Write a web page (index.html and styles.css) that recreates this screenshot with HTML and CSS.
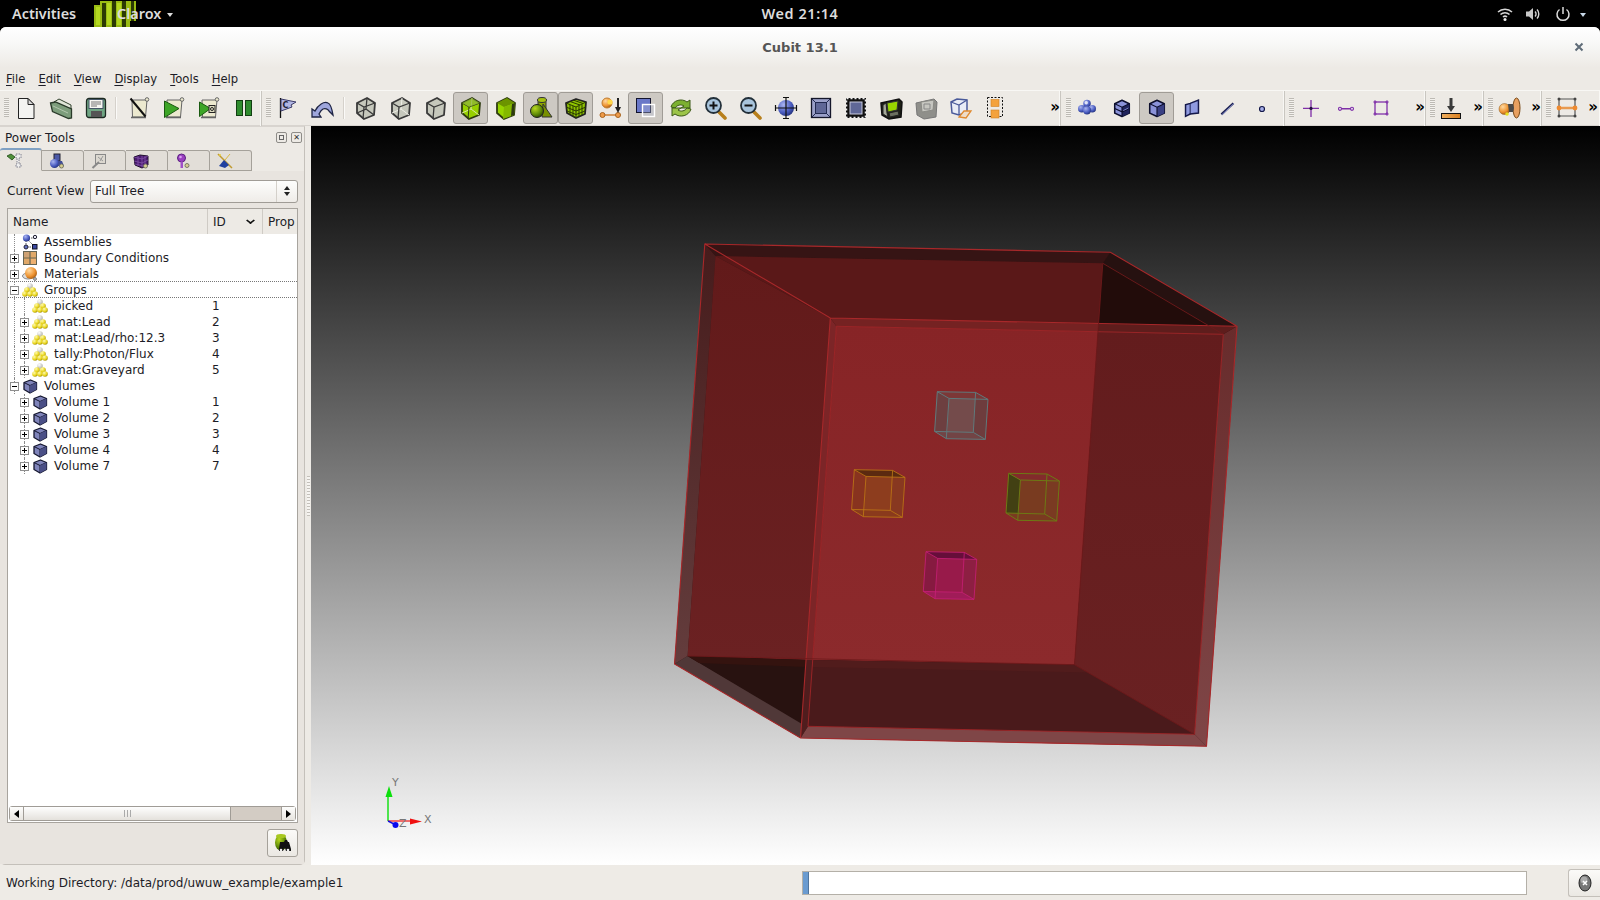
FILE: index.html
```html
<!DOCTYPE html>
<html lang="en">
<head>
<meta charset="utf-8">
<title>Cubit 13.1</title>
<link rel="stylesheet" href="styles.css">
</head>
<body>
<svg class="sprite" aria-hidden="true">
<defs>
<radialGradient id="gy" cx=".35" cy=".3" r=".8"><stop offset="0" stop-color="#fffbb0"/><stop offset=".6" stop-color="#e8d41c"/><stop offset="1" stop-color="#8f7f08"/></radialGradient>
<radialGradient id="gw" cx=".35" cy=".3" r=".8"><stop offset="0" stop-color="#fff"/><stop offset="1" stop-color="#a9a9a0"/></radialGradient>
<radialGradient id="go" cx=".35" cy=".3" r=".8"><stop offset="0" stop-color="#ffd9a0"/><stop offset=".6" stop-color="#ee9330"/><stop offset="1" stop-color="#96500c"/></radialGradient>
<radialGradient id="gb" cx=".35" cy=".3" r=".8"><stop offset="0" stop-color="#a9b4f0"/><stop offset=".6" stop-color="#4a5cc0"/><stop offset="1" stop-color="#1c2a70"/></radialGradient>
<radialGradient id="gg" cx=".35" cy=".3" r=".8"><stop offset="0" stop-color="#b8d820"/><stop offset=".6" stop-color="#5f8a08"/><stop offset="1" stop-color="#233a00"/></radialGradient>
<linearGradient id="gbar" x1="0" x2="1"><stop offset="0" stop-color="#f0b060"/><stop offset="1" stop-color="#d87f20"/></linearGradient>

<symbol id="i-new" viewBox="0 0 24 24"><path d="M4.500 2.500h9.500l6 6v14h-15.500z" fill="#f3f3f1" stroke="#222"/><path d="M14 2.500v6h6z" fill="#d8d8d8" stroke="#222"/></symbol>
<symbol id="i-open" viewBox="0 0 24 24"><path d="M5 6l5-3 12 6v4z" fill="#dfe5d8" stroke="#33432f"/><path d="M1.500 7l5-1 16 7v9l-3 .5-16-7z" fill="#7d9d7c" stroke="#2a3a2a" stroke-width="1.300"/><path d="M4 10l15 7" stroke="#b3c7ae"/></symbol>
<symbol id="i-save" viewBox="0 0 24 24"><rect x="2.500" y="2.500" width="19" height="19" rx="2.500" fill="#6fa583" stroke="#1d2a22" stroke-width="1.300"/><rect x="5" y="3.500" width="14" height="9" fill="#f6f6f2" stroke="#456"/><path d="M7 6h10M7 8h10M7 10h6" stroke="#777"/><rect x="7" y="15" width="11" height="6" fill="#555"/></symbol>
<symbol id="i-scroll" viewBox="0 0 24 24"><path d="M5 4h15l-1.500 17H5.500z" fill="#ece9cf" stroke="#666"/><circle cx="20" cy="3.500" r="1.800" fill="#ece9cf" stroke="#666"/><path d="M4 21.500h15" stroke="#666" stroke-width="1.500"/></symbol>
<symbol id="i-script" viewBox="0 0 24 24"><use href="#i-scroll"/><path d="M3.500 2.500l15 18" stroke="#111" stroke-width="2"/></symbol>
<symbol id="i-play" viewBox="0 0 24 24"><use href="#i-scroll"/><path d="M2.500 5l14.500 7.500-14.500 9z" fill="#3da526" stroke="#1a5a10"/></symbol>
<symbol id="i-playr" viewBox="0 0 24 24"><use href="#i-scroll"/><path d="M2.500 6l11 6.500-11 8z" fill="#3da526" stroke="#1a5a10"/><rect x="12" y="9.500" width="6" height="7" fill="#dedcc0" stroke="#222"/><circle cx="15" cy="13" r="1.500" fill="none" stroke="#222"/></symbol>
<symbol id="i-pause" viewBox="0 0 24 24"><rect x="4.500" y="4.500" width="6" height="15" fill="#2f8c2e" stroke="#123f12"/><rect x="13.500" y="4.500" width="6" height="15" fill="#2f8c2e" stroke="#123f12"/></symbol>
<symbol id="i-flag" viewBox="0 0 24 24"><path d="M5.500 2v20" stroke="#111" stroke-width="1.300"/><path d="M6 3l15 3-5 3 1 2-11 4z" fill="#b2b6e2" stroke="#3a3a66"/><text x="7.500" y="11.500" font-family="DejaVu Sans" font-size="8" font-weight="700" fill="#223">C</text></symbol>
<symbol id="i-undo" viewBox="0 0 24 24"><path d="M2 21v-8l3 2c3-6 9-10 13-8 3 1 4 6 5 12l-4-4c-1-2-4-3-6-2-2 1-3 3-4 5l2 3z" fill="#9ea6dc" stroke="#1e2444" stroke-width="1.300"/></symbol>

<symbol id="i-cwire" viewBox="0 0 24 24"><path d="M3 7l10-5 8 5-1 12-10 4-7-6z" fill="#c6c8bc" stroke="#3a3a3a" stroke-width="1.800" stroke-linejoin="round"/><path d="M3 7l7 4 11-4M10 11l-1 12M13 2l-1 11-9 4M12 13l8 6" fill="none" stroke="#3a3a3a" stroke-width="1.300"/></symbol>
<symbol id="i-chid" viewBox="0 0 24 24"><path d="M3 7l10-5 8 5-1 12-10 4-7-6z" fill="#c6c8bc" stroke="#3a3a3a" stroke-width="1.800" stroke-linejoin="round"/><path d="M13 2l-1 11-9 4M12 13l8 6" fill="none" stroke="#eeeee6"/><path d="M3 7l7 4 11-4M10 11l-1 12" fill="none" stroke="#3a3a3a" stroke-width="1.300"/></symbol>
<symbol id="i-cgray" viewBox="0 0 24 24"><path d="M3 7l10-5 8 5-1 12-10 4-7-6z" fill="#c6c8bc" stroke="#3a3a3a" stroke-width="1.800" stroke-linejoin="round"/><path d="M3 7l7 4 11-4M10 11l-1 12" fill="none" stroke="#3a3a3a" stroke-width="1.300"/></symbol>
<symbol id="i-cgw" viewBox="0 0 24 24"><path d="M3 7l10-5 8 5-1 12-10 4-7-6z" fill="#97d000" stroke="#2e3a10" stroke-width="1.800" stroke-linejoin="round"/><path d="M13 2l-1 11-9 4M12 13l8 6" fill="none" stroke="#d8e8a0"/><path d="M3 7l7 4 11-4M10 11l-1 12" fill="none" stroke="#2e3a10"/><path d="M13 2l8 5-11 4-7-4z" fill="#8fb33a" opacity=".7"/></symbol>
<symbol id="i-cg" viewBox="0 0 24 24"><path d="M3 7l10-5 8 5-1 12-10 4-7-6z" fill="#97d400" stroke="#2e3a10" stroke-width="1.800" stroke-linejoin="round"/><path d="M13 2l8 5-11 4-7-4z" fill="#6c9400"/><path d="M21 7l-11 4-1 12 11-4z" fill="#84b800"/><path d="M21 7l-1 12-3 1 1-12z" fill="#2e3a10"/></symbol>
<symbol id="i-comp" viewBox="0 0 24 24"><path d="M9 4v12h8V4z" fill="#8aa300" stroke="#333"/><ellipse cx="13" cy="4" rx="4.500" ry="2.500" fill="#a4c010" stroke="#333"/><path d="M14 8l9 13H13z" fill="#789000" stroke="#333"/><circle cx="8" cy="15" r="6.500" fill="url(#gg)" stroke="#222"/></symbol>
<symbol id="i-mesh" viewBox="0 0 24 24"><path d="M2 7l10-4 10 3-1 12-9 4-9-5z" fill="#8fc400" stroke="#222" stroke-width="1.800" stroke-linejoin="round"/><path d="M2 7l10 4 10-5M12 11v11M6 5.500l10 3.500M9 4l10 3.500M6 9v10M9 10v11M15 10v11M18 8.500v11M2 11l10 4 10-4M3 15l9 3.500 9-3.500" fill="none" stroke="#2a3a00"/></symbol>
<symbol id="i-pick" viewBox="0 0 24 24"><circle cx="8" cy="7" r="5" fill="url(#go)" stroke="#c07c30"/><circle cx="11" cy="6" r="2.600" fill="#ffd84a"/><path d="M3 19h16" stroke="#d69a60" stroke-width="2"/><circle cx="3.500" cy="19" r="2.500" fill="#ee9a48" stroke="#a86420"/><circle cx="19" cy="19" r="2.500" fill="#ee9a48" stroke="#a86420"/><path d="M19 2v11" stroke="#222" stroke-width="2"/><path d="M16 11l3 6 3-6z" fill="#222"/></symbol>
<symbol id="i-trans" viewBox="0 0 24 24"><rect x="2.500" y="2.500" width="14" height="14" fill="#6a78c8" stroke="#12142e"/><rect x="8.500" y="8.500" width="12" height="12" fill="#b8bcd8" fill-opacity=".35" stroke="#fff" stroke-width="1.400"/></symbol>
<symbol id="i-ref" viewBox="0 0 24 24"><path d="M2 11c2-7 11-9 16-5l3-2v8h-9l3-2c-3-2-7-1-9 2z" fill="#7cb030" stroke="#3d5a18"/><path d="M22 13c-2 7-11 9-16 5l-3 2v-8h9l-3 2c3 2 7 1 9-2z" fill="#9cc448" stroke="#3d5a18"/></symbol>
<symbol id="i-zin" viewBox="0 0 24 24"><path d="M14 15l7 7" stroke="#b8801c" stroke-width="3.600" stroke-linecap="round"/><circle cx="9.500" cy="9.500" r="7.500" fill="#a8c4dc" stroke="#23303a" stroke-width="1.800"/><path d="M5.500 9.500h8M9.500 5.500v8" stroke="#111" stroke-width="2"/></symbol>
<symbol id="i-zout" viewBox="0 0 24 24"><path d="M14 15l7 7" stroke="#b8801c" stroke-width="3.600" stroke-linecap="round"/><circle cx="9.500" cy="9.500" r="7.500" fill="#a8c4dc" stroke="#23303a" stroke-width="1.800"/><path d="M5.500 9.500h8" stroke="#111" stroke-width="2"/></symbol>
<symbol id="i-aim" viewBox="0 0 24 24"><circle cx="12" cy="12" r="8" fill="url(#gb)"/><path d="M1.500 12h21M12 1.500v21M1.500 9v6M22.500 9v6M9 1.500h6M9 22.500h6" stroke="#111" stroke-width="1.200" fill="none"/></symbol>
<symbol id="i-fit" viewBox="0 0 24 24"><rect x="2.500" y="2.500" width="19" height="19" fill="#9aa0c8" stroke="#15172a" stroke-width="1.300"/><rect x="6.500" y="6.500" width="11" height="11" fill="#5f6796" stroke="#222a50"/><path d="M3 3l4 4M21 3l-4 4M3 21l4-4M21 21l-4-4" stroke="#222a50"/></symbol>
<symbol id="i-film" viewBox="0 0 24 24"><rect x="2" y="2" width="20" height="20" fill="#111"/><rect x="2.500" y="2.500" width="19" height="19" fill="none" stroke="#eee" stroke-width="1.500" stroke-dasharray="2 2"/><rect x="6" y="6" width="12" height="12" fill="#5f6796" stroke="#c8cadc"/></symbol>
<symbol id="i-persp" viewBox="0 0 24 24"><path d="M2 7l18-4 3 3-1 15-12 2-7-4z" fill="#1e2016" stroke="#111" stroke-width="1.500"/><path d="M8 7l11-2-1 9-9 2z" fill="#98d400" stroke="#333"/><path d="M4 9l3-2 1 10 1 4-5-3z" fill="#a4a898" stroke="#222"/><path d="M10 17l9-2 1 4-9 2z" fill="#6c7060" stroke="#222"/></symbol>
<symbol id="i-persg" viewBox="0 0 24 24"><path d="M2 7l18-4 3 3-1 15-12 2-7-4z" fill="#8f8f8a" stroke="#777"/><path d="M7 6l13-2-1 10-11 2z" fill="#c6c6c0" stroke="#8a8a85"/><path d="M10 8h6v5h-6z" fill="none" stroke="#888"/></symbol>
<symbol id="i-clip" viewBox="0 0 24 24"><path d="M2 6l6-3 10 1v12l-8 3-7-2z" fill="#e8ecf6" stroke="#4a5a9a" stroke-width="1.500"/><path d="M2 6l8 3 8-5M10 9v10" fill="none" stroke="#4a5a9a" stroke-width="1.300"/><path d="M15 15l7 0-5 7-7-1z" fill="#eedcc8" stroke="#e08a30" stroke-width="1.300"/></symbol>
<symbol id="i-sel" viewBox="0 0 24 24"><rect x="3.500" y="1.500" width="15" height="19" fill="none" stroke="#111" stroke-dasharray="2 1.500"/><rect x="7" y="3.500" width="8" height="7" fill="#f4a23c" stroke="#d08020" stroke-width=".6"/><rect x="7" y="14" width="8" height="8" fill="#f4a23c" stroke="#d08020" stroke-width=".6"/></symbol>

<symbol id="i-vols" viewBox="-4 -4 32 32"><circle cx="12" cy="6" r="5" fill="url(#gb)"/><circle cx="5" cy="13" r="5" fill="url(#gb)"/><circle cx="19" cy="13" r="5" fill="url(#gb)"/><circle cx="12" cy="15" r="5.500" fill="url(#gb)"/><circle cx="11" cy="5" r="2.200" fill="#dfe3f7"/></symbol>
<symbol id="i-vol" viewBox="-2 -2 28 28"><path d="M3.500 7l8.500-4 8.500 4v11l-8.500 4-8.500-4z" fill="#8a92d8" stroke="#0c0e2c" stroke-width="1.800" stroke-linejoin="round"/><path d="M12 11l8.500-4v11l-8.500 4z" fill="#20245c"/><path d="M3.500 7l8.500 4 8.500-4M12 11v11M3.500 12.500l8.500 4 8.500-4" fill="none" stroke="#0c0e2c" stroke-width="1.300"/><path d="M13.500 15l6-3" stroke="#8a92d8"/></symbol>
<symbol id="i-vol2" viewBox="-2 -2 28 28"><path d="M3.500 7l8.500-4 8.500 4v11l-8.500 4-8.500-4z" fill="#8a92d8" stroke="#0c0e2c" stroke-width="1.800" stroke-linejoin="round"/><path d="M12 11l8.500-4v11l-8.500 4z" fill="#3a4084"/><path d="M3.500 7l8.500 4 8.500-4M12 11v11" fill="none" stroke="#0c0e2c" stroke-width="1.300"/></symbol>
<symbol id="i-surf" viewBox="-1 -1 26 26"><path d="M5 8.500l5-1.500 9-3.500v14l-9 1-5 2.500z" fill="#8f9ae0" stroke="#14184a" stroke-width="1.600"/><path d="M10 7v12" stroke="#14184a"/></symbol>
<symbol id="i-curve" viewBox="-3 -3 30 30"><path d="M5 20L20 6" stroke="#1c2050" stroke-width="2.800"/><path d="M5.500 20.500L20.500 6.500" stroke="#9aa4e4" stroke-width="1"/></symbol>
<symbol id="i-vert" viewBox="0 0 24 24"><circle cx="12" cy="13" r="2.500" fill="#a6aee8" stroke="#14184a" stroke-width="1.200"/></symbol>
<symbol id="i-pn" viewBox="-1.500 -1.500 27 27"><path d="M3 12.500h18M12 3v19" stroke="#7f2fa8" stroke-width="1.500"/><circle cx="12" cy="12.500" r="1.800" fill="#241040"/></symbol>
<symbol id="i-pl" viewBox="-3 -3 30 30"><path d="M6 13h12" stroke="#7f2fa8" stroke-width="1.700"/><circle cx="4.500" cy="13" r="1.900" fill="#e8e4f0" stroke="#7f2fa8" stroke-width="1.400"/><circle cx="19.500" cy="13" r="1.900" fill="#e8e4f0" stroke="#7f2fa8" stroke-width="1.400"/></symbol>
<symbol id="i-ps" viewBox="-2 -2 28 28"><rect x="5" y="5" width="14" height="14" fill="none" stroke="#7f2fa8" stroke-width="1.500"/><path d="M3 5h4M5 3v4M17 5h4M19 3v4M3 19h4M5 17v4M17 19h4M19 17v4" stroke="#7f2fa8" stroke-width="1.300"/></symbol>
<symbol id="i-bar" viewBox="0 0 24 24"><path d="M12 2v10" stroke="#3a3a3a" stroke-width="3"/><path d="M8 10l4 6 4-6z" fill="#3a3a3a"/><rect x="2.500" y="17.500" width="19" height="5" fill="url(#gbar)" stroke="#111"/></symbol>
<symbol id="i-spk" viewBox="0 0 24 24"><ellipse cx="19.500" cy="12" rx="3.500" ry="10" fill="#e8a060" stroke="#7a4a18"/><circle cx="7.500" cy="13" r="5.500" fill="url(#go)" stroke="#8a5a20" stroke-width=".5"/><path d="M11 8h5l1 4-1 4h-4z" fill="#4a4a4a"/><circle cx="10" cy="18" r="1.800" fill="#e8e020"/></symbol>
<symbol id="i-mrect" viewBox="0 0 24 24"><path d="M4 3h16v17H4z" fill="none" stroke="#555" stroke-width="1.200"/><path d="M4 12h16" stroke="#e89a50" stroke-width="2.500"/><circle cx="4" cy="12" r="2.400" fill="#ee8a30"/><circle cx="20" cy="12" r="2.400" fill="#ee8a30"/><circle cx="4" cy="3" r="1.500" fill="#444"/><circle cx="20" cy="3" r="1.500" fill="#444"/><circle cx="4" cy="20" r="1.500" fill="#444"/><circle cx="20" cy="20" r="1.500" fill="#444"/></symbol>

<symbol id="t-asm" viewBox="0 0 16 16"><path d="M4 4l9 0M4 4v9h9M4 4l9 9" stroke="#333" stroke-width=".8" fill="none" stroke-dasharray="1.500 1"/><circle cx="4.500" cy="4" r="3.600" fill="url(#gb)"/><circle cx="13" cy="3" r="1.700" fill="#e8e8f4" stroke="#223"/><circle cx="4" cy="13" r="2" fill="#6070c0" stroke="#223"/><rect x="10.500" y="10.500" width="4.500" height="4.500" fill="#3a48a0" stroke="#112"/></symbol>
<symbol id="t-bc" viewBox="0 0 16 16"><rect x="1.500" y="1.500" width="13" height="13" fill="#e0a868" stroke="#665"/><path d="M1 8h14M8 1v14" stroke="#665" stroke-width="1.200"/><path d="M2 2h5v5H2z" fill="#cfa274"/><path d="M9 9h5v5H9z" fill="#eeb070"/></symbol>
<symbol id="t-mat" viewBox="0 0 16 16"><ellipse cx="6" cy="10" rx="5.500" ry="3" fill="#ddd" stroke="#888"/><circle cx="9" cy="7" r="6" fill="url(#go)"/><circle cx="13" cy="13" r="1.400" fill="#ccc" stroke="#777"/></symbol>
<symbol id="t-grp" viewBox="0 0 16 16"><circle cx="8" cy="4" r="2.800" fill="url(#gw)"/><circle cx="5" cy="8" r="2.800" fill="url(#gy)"/><circle cx="11" cy="8" r="2.800" fill="url(#gy)"/><circle cx="3" cy="12" r="2.800" fill="url(#gy)"/><circle cx="8" cy="12" r="2.800" fill="url(#gy)"/><circle cx="13" cy="12" r="2.800" fill="url(#gy)"/></symbol>
<symbol id="t-vol" viewBox="0 0 16 16"><path d="M2 4.500L8.500 2 14.500 4.500V11.500L8 15 2 11.500z" fill="#7f84ba" stroke="#14162e" stroke-width="1.300" stroke-linejoin="round"/><path d="M2 4.500L8 7.500l6.500-3M8 7.500V15" fill="none" stroke="#14162e"/><path d="M8 7.500l6.500-3v7L8 15z" fill="#4a4f86"/></symbol>
</defs>
</svg>

<header class="topbar">
  <span class="activities">Activities</span>
  <svg class="logo" viewBox="0 0 45 27"><path d="M1 5h6V1h36v20h-6v6H1z" fill="#9abc14"/><path d="M9 3h4v24H9zM19 1h4v26h-4zM29 1h4v26h-4zM38 1h3v20h-3z" fill="#2c3a04"/><path d="M3 7h4v18H3zM14 3h4v22h-4zM24 3h4v22h-4z" fill="#b4d820"/></svg>
  <span class="appname">Clarox <i class="caret"></i></span>
  <span class="clock">Wed 21:14</span>
  <span class="tray">
    <svg class="tray-wifi" viewBox="0 0 16 16"><path d="M1 6a10 10 0 0 1 14 0M3.500 8.500a6.500 6.500 0 0 1 9 0M6 11a3 3 0 0 1 4 0" fill="none" stroke="#d6d6d6" stroke-width="1.500"/><circle cx="8" cy="13.500" r="1.500" fill="#eee"/></svg>
    <svg class="tray-vol" viewBox="0 0 16 16"><path d="M1 5.500h3L8 2v12L4 10.500H1z" fill="#c8c8c8"/><path d="M10 5.500a3.500 3.500 0 0 1 0 5M12 3.500a6.500 6.500 0 0 1 0 9" fill="none" stroke="#d6d6d6" stroke-width="1.400"/></svg>
    <svg class="tray-pow" viewBox="0 0 16 16"><path d="M8 1v7" stroke="#ddd" stroke-width="1.500"/><path d="M4.500 3.500a6 6 0 1 0 7 0" fill="none" stroke="#ddd" stroke-width="1.500"/></svg>
    <i class="caret caret-tray"></i>
  </span>
</header>

<div class="window">
  <div class="titlebar"><span class="title">Cubit 13.1</span><svg class="close" viewBox="0 0 10 10"><path d="M1.500 1.500l7 7M8.500 1.500l-7 7" stroke="#5f6c78" stroke-width="2"/></svg></div>
  <nav class="menubar">
    <span class="menu"><u>F</u>ile</span><span class="menu"><u>E</u>dit</span><span class="menu"><u>V</u>iew</span><span class="menu"><u>D</u>isplay</span><span class="menu"><u>T</u>ools</span><span class="menu"><u>H</u>elp</span>
  </nav>

  <div class="toolbars">
    <div class="tb tb1">
      <i class="grip"></i>
      <span class="btn"><svg><use href="#i-new"/></svg></span><span class="btn"><svg><use href="#i-open"/></svg></span><span class="btn"><svg><use href="#i-save"/></svg></span>
      <i class="sep"></i>
      <span class="btn"><svg><use href="#i-script"/></svg></span><span class="btn"><svg><use href="#i-play"/></svg></span><span class="btn"><svg><use href="#i-playr"/></svg></span><span class="btn"><svg><use href="#i-pause"/></svg></span>
    </div>
    <div class="tb tb2">
      <i class="grip"></i>
      <span class="btn"><svg><use href="#i-flag"/></svg></span><span class="btn"><svg><use href="#i-undo"/></svg></span>
      <i class="sep"></i>
      <span class="btn"><svg><use href="#i-cwire"/></svg></span><span class="btn"><svg><use href="#i-chid"/></svg></span><span class="btn"><svg><use href="#i-cgray"/></svg></span><span class="btn on"><svg><use href="#i-cgw"/></svg></span><span class="btn"><svg><use href="#i-cg"/></svg></span><span class="btn on"><svg><use href="#i-comp"/></svg></span><span class="btn on"><svg><use href="#i-mesh"/></svg></span><span class="btn"><svg><use href="#i-pick"/></svg></span><span class="btn on"><svg><use href="#i-trans"/></svg></span><span class="btn"><svg><use href="#i-ref"/></svg></span><span class="btn"><svg><use href="#i-zin"/></svg></span><span class="btn"><svg><use href="#i-zout"/></svg></span><span class="btn"><svg><use href="#i-aim"/></svg></span><span class="btn"><svg><use href="#i-fit"/></svg></span><span class="btn"><svg><use href="#i-film"/></svg></span><span class="btn"><svg><use href="#i-persp"/></svg></span><span class="btn"><svg><use href="#i-persg"/></svg></span><span class="btn"><svg><use href="#i-clip"/></svg></span><span class="btn"><svg><use href="#i-sel"/></svg></span>
      <b class="more">&raquo;</b>
    </div>
    <div class="tb tb3">
      <i class="grip"></i>
      <span class="btn"><svg><use href="#i-vols"/></svg></span><span class="btn"><svg><use href="#i-vol"/></svg></span><span class="btn on"><svg><use href="#i-vol2"/></svg></span><span class="btn"><svg><use href="#i-surf"/></svg></span><span class="btn"><svg><use href="#i-curve"/></svg></span><span class="btn"><svg><use href="#i-vert"/></svg></span>
    </div>
    <div class="tb tb4">
      <i class="grip"></i>
      <span class="btn"><svg><use href="#i-pn"/></svg></span><span class="btn"><svg><use href="#i-pl"/></svg></span><span class="btn"><svg><use href="#i-ps"/></svg></span>
      <b class="more">&raquo;</b>
    </div>
    <div class="tb tb5"><i class="grip"></i><span class="btn btn-s"><svg><use href="#i-bar"/></svg></span><b class="more">&raquo;</b></div>
    <div class="tb tb5"><i class="grip"></i><span class="btn btn-s"><svg><use href="#i-spk"/></svg></span><b class="more">&raquo;</b></div>
    <div class="tb tb5 tb-last"><i class="grip"></i><span class="btn btn-s"><svg><use href="#i-mrect"/></svg></span><b class="more">&raquo;</b></div>
  </div>

  <main class="main">
    <aside class="panel">
      <div class="panel-head">
        <span class="panel-title">Power Tools</span>
        <i class="float"><b class="float-sq"></b></i>
        <i class="float float-x">&#10005;</i>
      </div>
      <div class="tabs">
        <span class="tab active"><svg viewBox="0 0 16 16"><path d="M0 4l4-2 4 3-3 3z" fill="#4f8f3a" stroke="#1e4a18" stroke-width=".8"/><path d="M9 2h5v4h-2v6h2v3H9v-3h1V6H9z" fill="#eee" stroke="#667" stroke-width=".8" stroke-dasharray="1.500 1"/></svg></span>
        <span class="tab"><svg viewBox="0 0 16 16"><rect x="5" y="1" width="6" height="7" fill="#4c5aa8" stroke="#223"/><circle cx="5.500" cy="10.500" r="4.500" fill="url(#gb)"/><path d="M9 8h4l2 5H9z" fill="#3f4c98"/><circle cx="12.500" cy="13" r="2" fill="#d8cf90" stroke="#776"/></svg></span>
        <span class="tab"><svg viewBox="0 0 16 16"><rect x="4.500" y="1.500" width="10" height="9" fill="#dcd8d0" stroke="#888"/><path d="M8 9L1.500 15" stroke="#888" stroke-width="2"/><path d="M7 4l5 4M12 3l-3 5" stroke="#999"/></svg></span>
        <span class="tab"><svg viewBox="0 0 16 16"><path d="M1 4l6-2 8 1v9l-6 3-7-3z" fill="#4a1a70" stroke="#221030"/><path d="M1 8l8 2 6-3M2 11l8 2M5 3v10M9 3v11M12 3v10M1 4l8 2 6-3" fill="none" stroke="#8a5ab0" stroke-width=".7"/><circle cx="12.500" cy="13" r="2" fill="#d8cf90" stroke="#776"/></svg></span>
        <span class="tab"><svg viewBox="0 0 16 16"><circle cx="6.500" cy="5" r="4" fill="#9a40c0" stroke="#5a2080"/><circle cx="5.500" cy="4" r="1.300" fill="#d8a0ef"/><rect x="5.500" y="8.500" width="2.500" height="6.500" fill="#a050c8"/><circle cx="12" cy="12.500" r="2" fill="#d8cf90" stroke="#776"/></svg></span>
        <span class="tab"><svg viewBox="0 0 16 16"><path d="M1 1l14 14" stroke="#c09a30" stroke-width="1.500"/><path d="M2 13l5-6 5 5-4 3z" fill="#2040a0"/><path d="M13 1l-5 6" stroke="#d8b840"/><circle cx="3" cy="2" r="1" fill="#e8d040"/></svg></span>
      </div>
      <div class="pane">
        <div class="view-row">
          <label class="view-label">Current View</label>
          <div class="combo"><span class="combo-text">Full Tree</span><span class="combo-arrow"><i class="up"></i><i class="down"></i></span></div>
        </div>
        <div class="treebox">
          <div class="tree-head">
            <span class="th th-name">Name</span>
            <span class="th th-id">ID<i class="sort"></i></span>
            <span class="th th-prop">Prop</span>
          </div>
          <div class="tree">
            <div class="row l1 g1"><svg class="ti"><use href="#t-asm"/></svg><span class="nm">Assemblies</span></div>
            <div class="row l1 g1"><i class="ex plus"></i><svg class="ti"><use href="#t-bc"/></svg><span class="nm">Boundary Conditions</span></div>
            <div class="row l1 g1"><i class="ex plus"></i><svg class="ti"><use href="#t-mat"/></svg><span class="nm">Materials</span></div>
            <div class="row l1 g1 focus"><i class="ex"></i><svg class="ti"><use href="#t-grp"/></svg><span class="nm">Groups</span></div>
            <div class="row l2 g1 g2"><svg class="ti"><use href="#t-grp"/></svg><span class="nm">picked</span><span class="idv">1</span></div>
            <div class="row l2 g1 g2"><i class="ex plus"></i><svg class="ti"><use href="#t-grp"/></svg><span class="nm">mat:Lead</span><span class="idv">2</span></div>
            <div class="row l2 g1 g2"><i class="ex plus"></i><svg class="ti"><use href="#t-grp"/></svg><span class="nm">mat:Lead/rho:12.3</span><span class="idv">3</span></div>
            <div class="row l2 g1 g2"><i class="ex plus"></i><svg class="ti"><use href="#t-grp"/></svg><span class="nm">tally:Photon/Flux</span><span class="idv">4</span></div>
            <div class="row l2 g1 g2"><i class="ex plus"></i><svg class="ti"><use href="#t-grp"/></svg><span class="nm">mat:Graveyard</span><span class="idv">5</span></div>
            <div class="row l1 g1"><i class="ex"></i><svg class="ti"><use href="#t-vol"/></svg><span class="nm">Volumes</span></div>
            <div class="row l2 g2"><i class="ex plus"></i><svg class="ti"><use href="#t-vol"/></svg><span class="nm">Volume 1</span><span class="idv">1</span></div>
            <div class="row l2 g2"><i class="ex plus"></i><svg class="ti"><use href="#t-vol"/></svg><span class="nm">Volume 2</span><span class="idv">2</span></div>
            <div class="row l2 g2"><i class="ex plus"></i><svg class="ti"><use href="#t-vol"/></svg><span class="nm">Volume 3</span><span class="idv">3</span></div>
            <div class="row l2 g2"><i class="ex plus"></i><svg class="ti"><use href="#t-vol"/></svg><span class="nm">Volume 4</span><span class="idv">4</span></div>
            <div class="row l2 g2"><i class="ex plus"></i><svg class="ti"><use href="#t-vol"/></svg><span class="nm">Volume 7</span><span class="idv">7</span></div>
          </div>
          <div class="hscroll">
            <span class="sb-btn"><i class="tri-l"></i></span>
            <span class="sb-thumb"><i class="sb-grip"></i></span>
            <span class="sb-trough"></span>
            <span class="sb-btn sb-r"><i class="tri-r"></i></span>
          </div>
        </div>
        <div class="find-row">
          <span class="find"><svg viewBox="0 0 20 20"><ellipse cx="8" cy="9.500" rx="6" ry="8" fill="url(#gg)"/><ellipse cx="8" cy="3" rx="5" ry="2" fill="#a8c820"/><path d="M7 9h4l1-2h2l1 2h1l2 7v2h-5l-1-3h-1l-1 3H6v-2z" fill="#111"/><circle cx="8" cy="17" r="1.300" fill="#eee"/><circle cx="15" cy="17" r="1.300" fill="#eee"/></svg></span>
        </div>
      </div>
    </aside>
    <div class="splitter"><i class="split-dots"></i></div>
    <div class="viewport">
      <svg class="scene" viewBox="311 126 1289 739">
        <defs>
          <linearGradient id="bg" x1="0" y1="0" x2="0" y2="1"><stop offset="0" stop-color="#000"/><stop offset="1" stop-color="#fff"/></linearGradient>
          <linearGradient id="bandL" gradientUnits="userSpaceOnUse" x1="0" y1="244" x2="0" y2="664"><stop offset="0" stop-color="#461c1c"/><stop offset="1" stop-color="#643d3d"/></linearGradient>
          <linearGradient id="bandR" gradientUnits="userSpaceOnUse" x1="0" y1="326" x2="0" y2="746"><stop offset="0" stop-color="#682c2c"/><stop offset="1" stop-color="#7f4647"/></linearGradient>
          <linearGradient id="faceL" gradientUnits="userSpaceOnUse" x1="0" y1="256" x2="0" y2="660"><stop offset="0" stop-color="#621a1a"/><stop offset="1" stop-color="#6b2122"/></linearGradient>
          <linearGradient id="faceR" gradientUnits="userSpaceOnUse" x1="0" y1="330" x2="0" y2="735"><stop offset="0" stop-color="#631c1d"/><stop offset="1" stop-color="#6a2122"/></linearGradient>
          <linearGradient id="faceC" gradientUnits="userSpaceOnUse" x1="0" y1="326" x2="0" y2="665"><stop offset="0" stop-color="#872426"/><stop offset="1" stop-color="#8c2a2c"/></linearGradient>
          <polygon id="box" points="0,0 38.300,.7 50.700,7.700 48,47.700 9,47 -2.700,39.700"/>
          <polygon id="bl" points="0,0 11.700,6.700 10,40 -2.700,39.700"/>
          <polygon id="bt" points="0,0 38.300,.7 50.700,7.700 11.700,6.700"/>
          <polygon id="br" points="38,7.300 50.700,7.700 48,47.700 36,40.700"/>
          <polygon id="bb" points="10,40 36,40.700 48,47.700 9,47 -2.700,39.700"/>
          <polygon id="bc" points="11.700,6.700 38,7.300 36,40.700 10,40"/>
          <path id="bw" d="M0 0L38.300 .7 50.700 7.700 48 47.700 9 47 -2.700 39.700ZM0 0L11.700 6.700 50.700 7.700M11.700 6.700L9 47M38.300 .7L36 40.700 48 47.700M36 40.700L-2.700 39.700" fill="none"/>
        </defs>
        <rect x="311" y="126" width="1289" height="739" fill="url(#bg)"/>

        <polygon points="704.800,244 1110.400,252.300 1237,326.300 1206.500,746.300 800.500,738 674.500,664" fill="#3a1515"/>
        <polygon points="704.800,244 674.500,664 687.600,656 715.500,256" fill="url(#bandL)"/>
        <polygon points="704.800,244 1110.400,252.300 1102.800,263.300 715.500,256" fill="#361414"/>
        <polygon points="1110.400,252.300 1237,326.300 1223.300,334.300 1102.800,263.300" fill="#261110"/>
        <polygon points="1237,326.300 1206.500,746.300 1194.600,734.300 1223.300,334.300" fill="url(#bandR)"/>
        <polygon points="800.500,738 1206.500,746.300 1194.600,734.300 808,726.300" fill="#7f4647"/>
        <polygon points="674.500,664 800.500,738 808,726.300 687.600,656" fill="#503838"/>

        <polygon points="715.500,256 830.300,318 806,660 687.600,656" fill="url(#faceL)"/>
        <polygon points="715.500,256 1102.800,263.300 1098.700,324 830.300,318" fill="#5a1818"/>
        <polygon points="1102.800,263.300 1223.300,334.300 1098.300,331" fill="#220c0a"/>
        <polygon points="836.400,326.300 1098,331.700 1074.500,664.700 812.700,660" fill="url(#faceC)"/>
        <polygon points="830.300,318 836.400,326.300 812.700,660 806,660" fill="#7c2527"/>
        <polygon points="830.300,318 1098.700,323.800 1098,331.700 836.400,326.300" fill="#752222"/>
        <polygon points="1098.700,323.800 1237,326.300 1223.300,334.300 1098,331.700" fill="#5e1d1c"/>
        <polygon points="1098,331.700 1223.300,334.300 1194.600,734.300 1074.500,664.700" fill="url(#faceR)"/>
        <polygon points="806,660 1074.500,664.700 1194.600,734.300 808,726.300" fill="#4a1a1b"/>
        <polygon points="812.700,660 1074.500,664.700 1088,672.500 812.200,667" fill="#511c1c"/>
        <polygon points="687.600,656 806,660 802,724" fill="#281210"/>
        <polygon points="687.600,656 806,660 805.600,667 699,663" fill="#34130f"/>
        <polygon points="806,660 812.700,660 808,726.300 800.500,738" fill="#501d1e"/>

        <path d="M704.800 244L1110.400 252.300 1237 326.300 1206.500 746.300 800.500 738 674.500 664ZM704.800 244L830.300 318 1237 326.300M830.300 318L800.500 738" fill="none" stroke="#a8282a" stroke-width="1.100"/>
        <path d="M836.400 326.300L1223.300 334.300 1194.600 734.300 808 726.300Z" fill="none" stroke="#a02628" stroke-width=".9"/>
        <path d="M687.600 656L1074.500 664.700 1194.600 734.300M1102.800 263.300L1074.500 664.700M1102.800 263.300L1223.300 334.300" fill="none" stroke="#6e1a1b" stroke-width=".9"/>

        <g transform="translate(937.300 391.700)">
          <use href="#bl" fill="#6d3f40"/><use href="#bt" fill="#7c3737"/><use href="#br" fill="#6e3c3d"/><use href="#bb" fill="#724445"/><use href="#bc" fill="#744b4b"/>
          <use href="#bw" stroke="#5f7a7c"/>
        </g>
        <g transform="translate(854.300 469.700)">
          <use href="#bl" fill="#88331f"/><use href="#bt" fill="#5b2a10"/><use href="#br" fill="#883820"/><use href="#bb" fill="#8a3a1c"/><use href="#bc" fill="#8d3d1e"/>
          <use href="#bw" stroke="#bf7a14" stroke-opacity=".8"/>
        </g>
        <g transform="translate(1008.700 473.300)">
          <use href="#bl" fill="#424013"/><use href="#bt" fill="#822b2b"/><use href="#br" fill="#7a3a22"/><use href="#bb" fill="#7a3a20"/><use href="#bc" fill="#793b20"/>
          <use href="#bw" stroke="#6d7a14"/>
        </g>
        <g transform="translate(926 551.700)">
          <use href="#bl" fill="#861a40"/><use href="#bt" fill="#660e3a"/><use href="#br" fill="#8d1f42"/><use href="#bb" fill="#a01c58"/><use href="#bc" fill="#981a4a"/>
          <use href="#bw" stroke="#c81e78" stroke-opacity=".8"/>
        </g>

        <path d="M388 821V792" stroke="#18e018" stroke-width="1.500"/>
        <polygon points="389,786 385.500,797 392.500,797" fill="#0ce00c"/>
        <path d="M388 821H416" stroke="#f04040" stroke-width="1.500"/>
        <polygon points="422,821.500 410,818.500 410,824.500" fill="#f01010"/>
        <path d="M388 821L394 824" stroke="#1010e0" stroke-width="1.500"/>
        <circle cx="395.500" cy="825" r="3" fill="#0a0aee"/>
        <text class="axis" x="392" y="786">Y</text>
        <text class="axis" x="424" y="823">X</text>
        <text class="axis" x="399" y="827">Z</text>
      </svg>
    </div>
  </main>

  <footer class="status">
    <span class="status-text">Working Directory: /data/prod/uwuw_example/example1</span>
    <div class="progress"><i class="progress-fill"></i></div>
    <span class="stop"><svg viewBox="0 0 16 18"><ellipse cx="8" cy="9" rx="6" ry="8" fill="#777" stroke="#222"/><ellipse cx="7" cy="6" rx="3.500" ry="3.500" fill="#aaa"/><path d="M6 7l4 4M10 7l-4 4" stroke="#fff" stroke-width="1.500"/></svg></span>
  </footer>
</div>
</body>
</html>
```

FILE: styles.css
```css
* { box-sizing: border-box; }
html, body { margin: 0; padding: 0; }
body {
  width: 1600px; height: 900px; overflow: hidden;
  background: #000; display: flex; flex-direction: column;
  font-family: "DejaVu Sans", sans-serif; font-size: 12px; color: #1c1c26;
}
i, b { font-style: normal; }
.sprite { position: absolute; width: 0; height: 0; }

/* shell top bar */
.topbar {
  height: 27px; flex: none; display: flex; align-items: center; position: relative;
  color: #dcdcdc; font-family: "Noto Sans", sans-serif; font-weight: 600; font-size: 14.400px;
}
.activities { margin-left: 12px; width: 81px; }
.logo { width: 45px; height: 27px; margin-right: -21px; flex: none; }
.appname { position: relative; display: flex; align-items: center; }
.caret {
  display: inline-block; width: 0; height: 0; margin-left: 6px; margin-top: 3px;
  border-left: 3px solid transparent; border-right: 3px solid transparent; border-top: 4px solid #ddd;
}
.clock { position: absolute; left: 0; right: 0; text-align: center; top: 4px; letter-spacing: .6px; }
.tray { margin-left: auto; display: flex; align-items: center; }
.tray svg { display: block; }
.tray-wifi { width: 16px; height: 16px; margin-right: 12px; }
.tray-vol { width: 16px; height: 16px; margin-right: 14px; }
.tray-pow { width: 16px; height: 16px; }
.caret-tray { margin: 3px 14px 0 9px; border-top-color: #c8d8e8; }

/* window */
.window {
  flex: 1; min-height: 0; display: flex; flex-direction: column;
  background: #edeae5; border-radius: 6px 6px 0 0; overflow: hidden;
}
.titlebar {
  height: 41px; flex: none; display: flex; align-items: center; justify-content: center; position: relative;
  background: linear-gradient(#fff 0, #f8f8f7 40%, #edeae5 100%);
}
.title { font-weight: 700; font-size: 13px; color: #555; font-family: "DejaVu Sans", sans-serif; }
.close { position: absolute; right: 16px; top: 15px; width: 10px; height: 10px; }
.menubar { height: 22px; flex: none; display: flex; align-items: center; padding: 0 0 0 6px; gap: 13px; font-size: 11.600px; }
.menu u { text-underline-offset: 2px; }

.toolbars { height: 36px; flex: none; display: flex; border-top: 1px solid #f8f7f4; border-bottom: 1px solid #d8d4cf; }
.tb { display: flex; align-items: center; height: 35px; padding-bottom: 2px; border-right: 1px solid #c9c6c0; box-shadow: inset -1px 0 0 #f8f7f4; padding-left: 4px; position: relative; }
.tb1 { width: 262px; }
.tb2 { width: 799px; }
.tb3 { width: 224px; padding-left: 5px; }
.tb4 { width: 141px; padding-left: 4px; }
.tb5 { width: 58px; padding-left: 4px; }
.tb-last { flex: 1; border-right: 0; padding-right: 2px; }
.grip {
  width: 5px; height: 19px; flex: none;
  background: repeating-linear-gradient(#bdbab4 0 1px, #f4f2ee 1px 2px);
}
.tb1 .grip { margin-right: -1px; }
.tb2 .grip { margin-right: -2px; }
.tb3 .grip { margin-right: -2px; }
.tb4 .grip { margin-right: -1px; }
.tb5 .grip { margin-right: 1px; }
.btn { width: 35px; height: 32px; flex: none; display: flex; align-items: center; justify-content: center; border: 1px solid transparent; border-radius: 3px; }
.btn svg { width: 24px; height: 24px; display: block; }
.btn.on { background: #cdc9c3; border-color: #a09c96; }
.btn-s { width: 30px; }
.sep { width: 1px; height: 22px; background: #fbfaf8; box-shadow: -1px 0 0 #d5d1cb; flex: none; margin: 0 4px 0 3px; }
.tb2 .sep { margin: 0 3px 0 5px; }
.more { margin-left: auto; margin-right: 0; font-size: 15px; font-weight: 700; color: #000; line-height: 1; }

/* main area */
.main { height: 739px; flex: none; display: flex; }
.panel {
  width: 305px; flex: none; display: flex; flex-direction: column;
  background: #e8e4df; border: 1px solid #c4c0ba; border-top-color: #d8d4cf; border-left-color: #aaa69f; border-radius: 0 0 5px 5px; border-left: 0;
}
.panel-head { height: 23px; flex: none; display: flex; align-items: center; padding: 0 2px 2px 5px; gap: 4px; background: #edeae5; border-bottom: 0; }
.panel-title { flex: 1; font-size: 12px; }
.float { width: 11px; height: 11px; border: 1px solid #8e8c88; border-radius: 2px; display: flex; align-items: center; justify-content: center; font-size: 8px; font-weight: 700; color: #333; line-height: 1; }
.float-sq { width: 5px; height: 5px; border: 1px solid #666; }
.float-x { margin-left: 0; }

.tabs { height: 21px; flex: none; display: flex; align-items: flex-end; position: relative; z-index: 1; background: #edeae5; }
.tab {
  width: 42px; height: 21px; display: flex; align-items: center; justify-content: center; padding-right: 12px;
  background: #e2ded8; border: 1px solid #a5a19a; border-left-width: 0; border-bottom: 1px solid #a5a19a; border-radius: 0 3px 0 0;
}
.tab svg { width: 16px; height: 16px; display: block; }
.tab.active { width: 42px; height: 23px; background: #e8e4df; border-top: 2px solid #7fa1c4; border-bottom-color: #e8e4df; border-radius: 3px 3px 0 0; }

.pane { flex: 1; min-height: 0; display: flex; flex-direction: column; padding: 0 6px 0 7px; background: #e8e4df; border-top: 1px solid #a5a19a; margin-top: -1px; }
.view-row { height: 37px; flex: none; display: flex; align-items: center; padding-top: 3px; }
.view-label { width: 83px; flex: none; white-space: nowrap; font-size: 12px; }
.combo {
  flex: 1; height: 23px; display: flex; align-items: center; padding-left: 4px;
  background: linear-gradient(#fdfdfc, #efece8); border: 1px solid #a09c96; border-radius: 3px;
}
.combo-text { flex: 1; font-size: 12px; }
.combo-arrow { width: 21px; height: 100%; border-left: 1px solid #d4d0ca; display: flex; flex-direction: column; align-items: center; justify-content: center; gap: 2px; }
.up { border-left: 3.500px solid transparent; border-right: 3.500px solid transparent; border-bottom: 4px solid #222; }
.down { border-left: 3.500px solid transparent; border-right: 3.500px solid transparent; border-top: 4px solid #222; }

.treebox { height: 615px; flex: none; background: #fff; border: 1px solid #a8a49e; display: flex; flex-direction: column; }
.tree-head { height: 25px; flex: none; display: flex; background: #edeae5; overflow: hidden; }
.th { display: flex; align-items: center; padding: 0 0 0 5px; box-shadow: inset -1px 0 0 #cfcbc5; font-size: 12px; white-space: nowrap; overflow: hidden; }
.th-name { width: 200px; }
.th-id { width: 55px; position: relative; }
.th-prop { flex: 1; box-shadow: none; }
.sort { position: absolute; right: 9px; top: 10px; width: 7px; height: 7px; border-right: 2px solid #111; border-bottom: 2px solid #111; transform: scale(.9,.7) rotate(45deg); transform-origin: center; margin-top: -2px; }

.tree { flex: 1; min-height: 0; }
.row { height: 16px; display: flex; align-items: center; position: relative; font-size: 12px; white-space: nowrap; }
.row.g1::before { content: ""; position: absolute; left: 6px; top: 0; bottom: 0; border-left: 1px dotted #8c8c8c; }
.row.g2::after { content: ""; position: absolute; left: 16px; top: 0; bottom: 0; border-left: 1px dotted #8c8c8c; }
.focus { border-top: 1px dotted #777; border-bottom: 1px dotted #777; margin-top: -1px; height: 17px; }
.ti { width: 16px; height: 16px; flex: none; position: absolute; }
.l1 .ti { left: 14px; }
.l2 .ti { left: 24px; }
.nm { position: absolute; top: 0; line-height: 16px; }
.l1 .nm { left: 36px; }
.l2 .nm { left: 46px; }
.idv { position: absolute; left: 204px; line-height: 16px; }
.ex { position: absolute; z-index: 1; width: 9px; height: 9px; top: 4px; background: #fff; border: 1px solid #8f8f8f; }
.l1 .ex { left: 2px; }
.l2 .ex { left: 12px; }
.ex::before { content: ""; position: absolute; left: 1px; top: 3px; width: 5px; height: 1px; background: #000; }
.ex.plus::after { content: ""; position: absolute; left: 3px; top: 1px; width: 1px; height: 5px; background: #000; }

.hscroll { height: 15px; flex: none; margin: 0 1px; display: flex; border: 1px solid #a09c96; border-radius: 3px; margin-bottom: 1px; }
.sb-btn { width: 14px; flex: none; display: flex; align-items: center; justify-content: center; background: linear-gradient(#fdfdfc, #e8e5e0); border-right: 1px solid #a09c96; }
.sb-r { border-right: 0; border-left: 1px solid #a09c96; }
.tri-l { border-top: 4px solid transparent; border-bottom: 4px solid transparent; border-right: 5px solid #000; }
.tri-r { border-top: 4px solid transparent; border-bottom: 4px solid transparent; border-left: 5px solid #000; }
.sb-thumb { width: 207px; flex: none; display: flex; align-items: center; justify-content: center; background: linear-gradient(#fefefe, #e4e1dc); border-right: 1px solid #a09c96; }
.sb-grip { width: 7px; height: 7px; background: repeating-linear-gradient(90deg, #aaa 0 1px, transparent 1px 3px); }
.sb-trough { flex: 1; background: #d3ccc4; }

.find-row { flex: 1; display: flex; justify-content: flex-end; align-items: flex-start; padding-top: 6px; }
.find { width: 31px; height: 28px; display: flex; align-items: center; justify-content: center; background: linear-gradient(#fbfaf8, #ebe8e3); border: 1px solid #a5a19a; border-radius: 3px; }
.find svg { width: 20px; height: 20px; display: block; }

.splitter { width: 6px; flex: none; display: flex; align-items: center; justify-content: center; }
.split-dots { width: 3px; height: 40px; background: repeating-linear-gradient(#c4c0ba 0 1px, #f6f4f1 1px 3px); }
.viewport { flex: 1; min-width: 0; }
.scene { width: 1289px; height: 739px; display: block; }
.axis { font-family: "DejaVu Sans", sans-serif; font-size: 11px; fill: #777; }

/* status */
.status { flex: 1; min-height: 0; display: flex; align-items: center; background: #eeebe6; }
.status-text { width: 802px; flex: none; padding-left: 6px; font-size: 12px; white-space: nowrap; }
.progress { width: 725px; height: 24px; flex: none; background: #fff; border: 1px solid #b4b0a8; display: flex; }
.progress-fill { width: 6px; background: #6a9bd0; border-right: 1px solid #50749c; }
.stop { width: 32px; height: 28px; margin-left: 41px; flex: none; display: flex; align-items: center; justify-content: center; background: linear-gradient(#fbfaf8, #ebe8e3); border: 1px solid #c4c0ba; border-right: 0; border-radius: 3px 0 0 3px; }
.stop svg { width: 16px; height: 18px; display: block; }
```
